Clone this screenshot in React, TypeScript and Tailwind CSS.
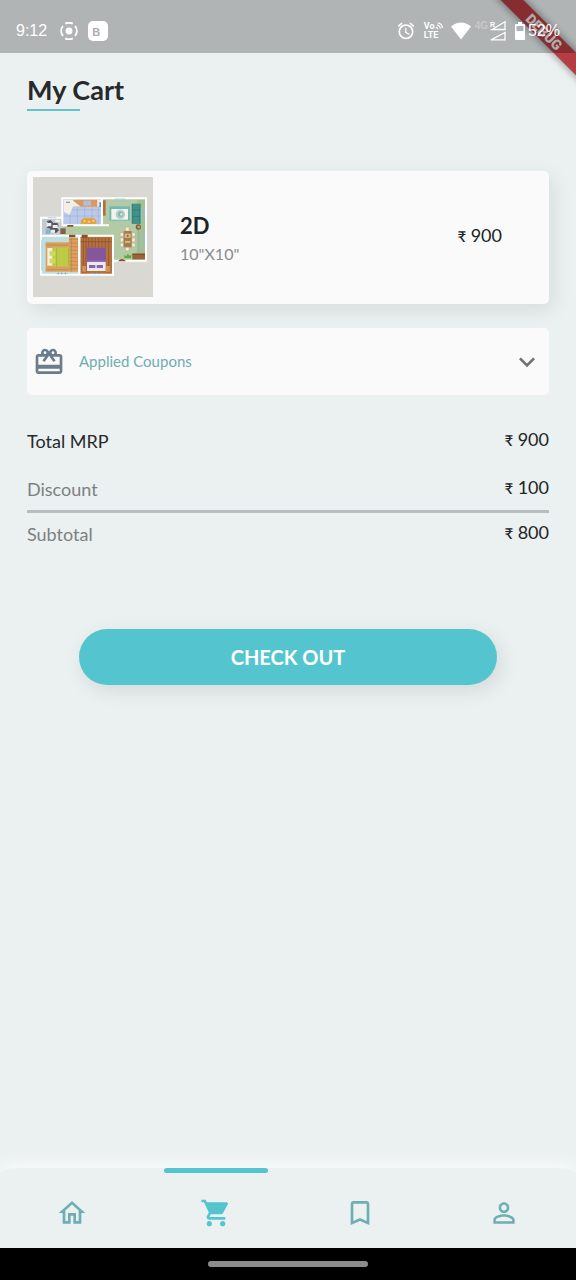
import type { ReactNode } from "react";

const icons = {
  home: "M12 5.69l5 4.5V18h-2v-6H9v6H7v-7.81l5-4.5M12 3L2 12h3v8h6v-6h2v6h6v-8h3L12 3z",
  cart: "M7 18c-1.1 0-1.99.9-1.99 2S5.9 22 7 22s2-.9 2-2-.9-2-2-2zM1 2v2h2l3.6 7.59-1.35 2.45c-.16.28-.25.61-.25.96 0 1.1.9 2 2 2h12v-2H7.42c-.14 0-.25-.11-.25-.25l.03-.12.9-1.63h7.45c.75 0 1.41-.41 1.75-1.03l3.58-6.49A1.003 1.003 0 0020 4H5.21l-.94-2H1zm16 16c-1.1 0-1.99.9-1.99 2s.89 2 1.99 2 2-.9 2-2-.9-2-2-2z",
  bookmark: "M17 3H7c-1.1 0-1.99.9-1.99 2L5 21l7-3 7 3V5c0-1.1-.9-2-2-2zm0 15l-5-2.18L7 18V5h10v13z",
  person:
    "M12 5.9c1.16 0 2.1.94 2.1 2.1s-.94 2.1-2.1 2.1S9.9 9.16 9.9 8s.94-2.1 2.1-2.1m0 9c2.97 0 6.1 1.46 6.1 2.1v1.1H5.9V17c0-.64 3.13-2.1 6.1-2.1M12 4C9.79 4 8 5.79 8 8s1.79 4 4 4 4-1.79 4-4-1.79-4-4-4zm0 9c-2.67 0-8 1.34-8 4v3h16v-3c0-2.66-5.33-4-8-4z",
  gift: "M20 6h-2.18c.11-.31.18-.65.18-1 0-1.66-1.34-3-3-3-1.05 0-1.96.54-2.5 1.35l-.5.67-.5-.68C10.96 2.54 10.05 2 9 2 7.34 2 6 3.34 6 5c0 .35.07.69.18 1H4c-1.11 0-1.99.89-1.99 2L2 19c0 1.11.89 2 2 2h16c1.11 0 2-.89 2-2V8c0-1.11-.89-2-2-2zm-5-2c.55 0 1 .45 1 1s-.45 1-1 1-1-.45-1-1 .45-1 1-1zM9 4c.55 0 1 .45 1 1s-.45 1-1 1-1-.45-1-1 .45-1 1-1zm11 15H4v-2h16v2zm0-5H4V8h5.08L7 10.83 8.62 12 11 8.76l1-1.36 1 1.36L15.38 12 17 10.83 14.92 8H20v6z",
  chevron: "M16.59 8.59L12 13.17 7.41 8.59 6 10l6 6 6-6z",
  alarm:
    "M22 5.72l-4.6-3.86-1.29 1.53 4.6 3.86L22 5.72zM7.88 3.39L6.6 1.86 2 5.71l1.29 1.53 4.59-3.85zM12.5 8H11v6l4.75 2.85.75-1.23-4-2.37V8zM12 4c-4.97 0-9 4.03-9 9s4.02 9 9 9c4.97 0 9-4.03 9-9s-4.03-9-9-9zm0 16c-3.87 0-7-3.13-7-7s3.13-7 7-7 7 3.13 7 7-3.13 7-7 7z",
};

function Icon({ d, className }: { d: string; className: string }) {
  return (
    <svg viewBox="0 0 24 24" fill="currentColor" aria-hidden="true" className={className}>
      <path d={d} />
    </svg>
  );
}

function StatusBar() {
  return (
    <header className="relative z-20 flex h-[53px] items-center bg-black/25 px-4 pt-2 font-['Liberation_Sans',sans-serif] text-white">
      <span className="text-base">9:12</span>
      <svg viewBox="0 0 18 18" className="ml-[13px] size-[18px]" fill="none" stroke="white" strokeWidth="1.9" aria-hidden="true">
        <circle cx="9" cy="9" r="3.4" fill="white" stroke="none" />
        <path d="M5.2 1.7a8.2 8.2 0 0 1 7.6 0M5.2 16.3a8.2 8.2 0 0 0 7.6 0M3 4a7.9 7.9 0 0 0 0 10M15 4a7.9 7.9 0 0 1 0 10" />
      </svg>
      <span className="ml-2.5 flex size-5 items-center rounded-[5px] bg-white pt-1 pl-1 text-[11px] leading-none font-bold text-[#a9aeae]">
        B
      </span>
      <span className="flex-1" />
      <Icon d={icons.alarm} className="size-5" />
      <span className="ml-2 flex flex-col font-['Roboto',sans-serif] text-[9px] leading-[9px] font-bold">
        <span className="flex items-center">
          Vo
          <svg viewBox="0 0 8 8" className="size-2" fill="none" stroke="white" strokeWidth="1.2" aria-hidden="true">
            <path d="M1 5l2 2M2 3c2 0 3 1.5 3.5 3.5M2.5 1c2.5 0 4.5 2 5 5" />
          </svg>
        </span>
        <span>LTE</span>
      </span>
      <svg viewBox="0 0 20 18" className="ml-2 h-[18px] w-5" fill="white" aria-hidden="true">
        <path d="M0 4.5Q10-3.5 20 4.5L10 17.5Z" />
      </svg>
      <span className="ml-1 self-start text-[10px] leading-[36px] font-bold text-white/30">4G</span>
      <span className="relative ml-0.5 block h-5 w-4">
        <svg viewBox="0 0 16 20" className="h-5 w-4" fill="none" stroke="white" strokeWidth="1.3" aria-hidden="true">
          <path d="M2 8.5H15V.8L5 6.7ZM1 18.8H15V11.5Z" />
        </svg>
        <span className="absolute top-0 left-0 text-[7px] leading-none font-bold">R</span>
      </span>
      <svg viewBox="0 0 12 18" className="ml-2 h-[18px] w-3" aria-hidden="true">
        <path fill="white" d="M4 0h4v2h2q1 0 1 1v14q0 1-1 1H2q-1 0-1-1V3q0-1 1-1h2Z" />
        <path fill="#aeb3b3" d="M2.5 4h7v5h-7Z" />
      </svg>
      <span className="ml-0.5 text-base">52%</span>
    </header>
  );
}

function FloorPlan() {
  return (
    <svg viewBox="39 36 360 360" role="img" aria-label="Floor plan" className="size-[120px] shrink-0">
      <path fill="#d9d8d3" d="M39 36h360v360H39z" />
      <path fill="#b2cba4" d="M128 101h250v186h-98v-70H124v-40h4z" />
      {/* kitchen */}
      <path fill="#bccaea" d="M128 101h117v79H128z" />
      <path stroke="#9db0dc" strokeWidth="2" fill="none" d="M128 135h117M128 153h117M150 125v55M172 125v55M194 125v55M216 125v55M235 125v55" />
      <path fill="#f5eee4" d="M132 104h112v20h-85l-10 26-17-10z" />
      <path fill="#d99a60" d="M158 106l8-2h66v21h-50z" />
      <path fill="#b5bed0" d="M190 107h23v15h-23z" />
      <path fill="#6c82ac" d="M238 112h6v14h-6zM138 110h12v3h-12z" />
      <path fill="#e4a546" d="M182 171q2-15 24-12 24-3 24 14v4h-48z" />
      <g fill="#f5cf75" stroke="#b86f26" strokeWidth="1">
        <circle cx="194" cy="168" r="5" />
        <circle cx="207" cy="170" r="5" />
        <circle cx="220" cy="168" r="5" />
      </g>
      {/* living and dining */}
      <path fill="#ad713b" d="M249 106h8v46h-8z" />
      <path fill="#a3bf93" d="M350 104h28v170h-28z" />
      <path fill="#72b9b4" d="M268 124h62v43h-62z" />
      <path fill="#f1f4eb" d="M274 132h50v32h-50z" />
      <circle cx="301" cy="148" r="14" fill="#b5cfca" />
      <circle cx="302" cy="148" r="8" fill="#8fb0ae" />
      <circle cx="304" cy="148" r="4" fill="#d4e4dc" />
      <path fill="#3f938b" d="M335 116h27v61h-27z" />
      <path fill="none" stroke="#26746f" strokeWidth="1.5" d="M338 118v56M338 135h22M338 154h22M359 118v56" />
      <path
        fill="#f8f0dc"
        stroke="#b59468"
        strokeWidth="1"
        d="M317 187h10v11h-10zM317 246h10v11h-10zM301 203h9v11h-9zM301 219h9v11h-9zM301 235h9v10h-9zM336 203h9v11h-9zM336 219h9v11h-9zM336 235h9v10h-9z"
      />
      <path fill="#a87d54" d="M311 198h24v49h-24z" />
      <path fill="#d9bb86" d="M314 206h18v12h-18zM315 228h16v5h-16z" />
      <circle cx="323" cy="212" r="3" fill="#8c5c3a" />
      <circle cx="355" cy="186" r="8" fill="#79633f" />
      <circle cx="356" cy="186" r="4" fill="#c1a56d" />
      <path fill="#9a6236" d="M337 266h39v18h-39z" />
      <path fill="#7a4726" d="M337 266h39v3h-39z" />
      <path fill="#66a83d" d="M314 280l-2-9 8 2 3-7 6 6 7-2-4 10z" />
      <path fill="none" stroke="#8fb5a3" strokeWidth="2" d="M356 194v72" />
      {/* bathroom */}
      <path fill="#c4cacf" d="M65 161h63v50H65z" />
      <path fill="#56555b" d="M80 168l12-3 8 9 12-1 4 10-7 3 8 10-9 8-10-3-11 2 4-12-11-3 8-9z" />
      <path fill="#eaf0f2" d="M80 174h14v10H80zM98 180h15v9H98zM91 194h14v9H91zM106 164h14v8h-14z" />
      <path fill="#86b6d4" d="M78 188l16 9-5 11H76z" />
      <path fill="#895e42" d="M121 190h16v17h-16z" />
      {/* bedrooms */}
      <path fill="#bde0df" d="M64 215h113v114H64z" />
      <path fill="#dba061" d="M77 232h70v88H77zM147 219h27v101h-27z" />
      <path fill="none" stroke="#c17f43" strokeWidth="2" d="M148 223h26M148 234h26M148 245h26M148 256h26M148 267h26M148 278h26M148 289h26M148 300h26M148 311h26M77 240h69M77 314h69M154 219v101" />
      <path fill="#bcca45" d="M95 247h53v58H95z" />
      <path fill="#aaba36" d="M108 247h3v58h-3zM144 250h4v52h-4z" />
      <path fill="#f3edda" d="M82 249h15v53H82z" />
      <path fill="#ccd964" d="M89 258h17v14H89zM89 281h17v14H89z" />
      <path fill="#b4723f" d="M181 215h95v112h-95z" />
      <path fill="none" stroke="#8c4f2c" strokeWidth="2" d="M190 219v105M198 219v105M206 219v28M216 219v28M226 219v28M236 219v28M246 219v28M256 219v28M266 219v105M181 230h95" />
      <path fill="#cb9560" d="M187 303h11v17h-11zM258 303h12v17h-12z" />
      <path fill="#84579c" d="M200 248h58v45h-58z" />
      <path fill="#946bab" d="M200 286h58v6h-58z" />
      <path fill="#eee9ed" d="M201 291h56v27h-56z" />
      <path fill="#8865a8" d="M207 300h19v9h-19zM230 300h19v9h-19z" />
      <path fill="none" stroke="#fff" strokeWidth="6" d="M267 181H127V100h251v187h-98M246 100v78M127 158H63v54h216v117H63V212M178 212v117" />
      <path fill="none" stroke="#99c6dc" strokeWidth="2" d="M283 102h34M283 108h34M365 130h8v32h-8zM365 208h8v32h-8zM108 326h36M213 326h28M65 225v92M83 158h26" />
      <path fill="#8b4e28" d="M142 180h18v5h-18zM147 209h19v8h-19zM185 209h18v9h-18zM294 289q12-14 24 0z" />
      <path fill="none" stroke="#6e7f9d" strokeWidth="2" d="M115 323v5M125 323v5M136 323v5M224 322v5M236 322v5" />
    </svg>
  );
}

function Price({ amount }: { amount: number }) {
  return (
    <span className="text-lg leading-6 text-[#202425]">
      <span className="text-[15px] font-medium">₹</span> {amount}
    </span>
  );
}

function SummaryRow({ label, amount, className }: { label: string; amount: number; className: string }) {
  return (
    <div className="flex items-start justify-between">
      <dt className={`pt-0.5 text-lg leading-6 ${className}`}>{label}</dt>
      <dd className="flex">
        <Price amount={amount} />
      </dd>
    </div>
  );
}

function NavItem({ label, active, children }: { label: string; active?: boolean; children: ReactNode }) {
  return (
    <a
      href="#"
      aria-label={label}
      aria-current={active ? "page" : undefined}
      className={`flex flex-1 flex-col items-center ${active ? "text-[#54c5cf]" : "text-[#6fafb3]"}`}
    >
      <span className={`h-[5px] w-[104px] rounded-full ${active ? "bg-[#54c5cf]" : ""}`} />
      <span className="mt-6">{children}</span>
    </a>
  );
}

export default function App() {
  return (
    <div className="relative flex min-h-screen flex-col overflow-hidden bg-[#ebf1f1] font-['Lato',sans-serif]">
      <div className="pointer-events-none absolute top-0 right-0 z-10 size-[130px] overflow-hidden">
        <div className="absolute top-6 -right-[38px] flex h-4 w-[140px] rotate-45 items-center justify-center bg-[#b43c42] font-['Roboto',sans-serif] text-[14px] leading-4 font-black text-[#ece5e5] shadow-[0_0_8px_rgba(0,0,0,0.5)]">
          DEBUG
        </div>
      </div>
      <StatusBar />

      <main className="flex-1 px-[27px] pt-[19px]">
        <h1 className="text-[27px] leading-9 font-bold text-[#27292b]">My Cart</h1>
        <div className="mt-px h-0.5 w-[53px] bg-[#63c3cb]" />

        <article className="mt-[60px] flex h-[133px] items-start rounded-[5px] bg-[#fafafa] p-1.5 pr-[47px] shadow-[4px_6px_20px_rgba(0,0,0,0.09)]">
          <FloorPlan />
          <div className="ml-[27px] flex-1 self-center">
            <h2 className="text-[22px] leading-8 font-bold text-[#202223]">2D</h2>
            <p className="text-base leading-6 text-[#8a8c8c]">10"X10"</p>
          </div>
          <div className="self-center pb-1">
            <Price amount={900} />
          </div>
        </article>

        <button type="button" className="mt-6 flex h-[67px] w-full items-center rounded-[5px] bg-[#fafafa] px-1.5 text-left">
          <Icon d={icons.gift} className="size-8 text-[#6d7c8b]" />
          <span className="ml-3.5 flex-1 text-[15px] text-[#6fadb2]">Applied Coupons</span>
          <Icon d={icons.chevron} className="size-8 text-[#707272]" />
        </button>

        <dl className="mt-8">
          <SummaryRow label="Total MRP" amount={900} className="text-[#27292b]" />
          <div className="h-[22px]" />
          <SummaryRow label="Discount" amount={100} className="text-[#7c8081]" />
          <div className="mt-[9px] mb-[7px] h-[3px] bg-[#b8bebf]" />
          <SummaryRow label="Subtotal" amount={800} className="text-[#7c8081]" />
        </dl>

        <button
          type="button"
          className="mx-auto mt-[83px] block h-14 w-4/5 rounded-full bg-[#54c5cf] text-xl font-bold text-white shadow-[4px_6px_20px_rgba(0,0,0,0.1)]"
        >
          CHECK OUT
        </button>
      </main>

      <nav className="flex h-20 rounded-tl-[20px_5px] rounded-tr-[20px_5px] bg-[#ebf1f1] shadow-[0_-4px_16px_rgba(255,255,255,0.7)]">
        <NavItem label="Home"><Icon d={icons.home} className="size-8" /></NavItem>
        <NavItem label="Cart" active><Icon d={icons.cart} className="size-8" /></NavItem>
        <NavItem label="Saved"><Icon d={icons.bookmark} className="size-8" /></NavItem>
        <NavItem label="Profile"><Icon d={icons.person} className="size-8" /></NavItem>
      </nav>

      <footer className="relative flex h-8 items-center justify-center bg-black">
        <span className="h-1.5 w-40 rounded-full bg-[#8c8c8c]" />
      </footer>
    </div>
  );
}
